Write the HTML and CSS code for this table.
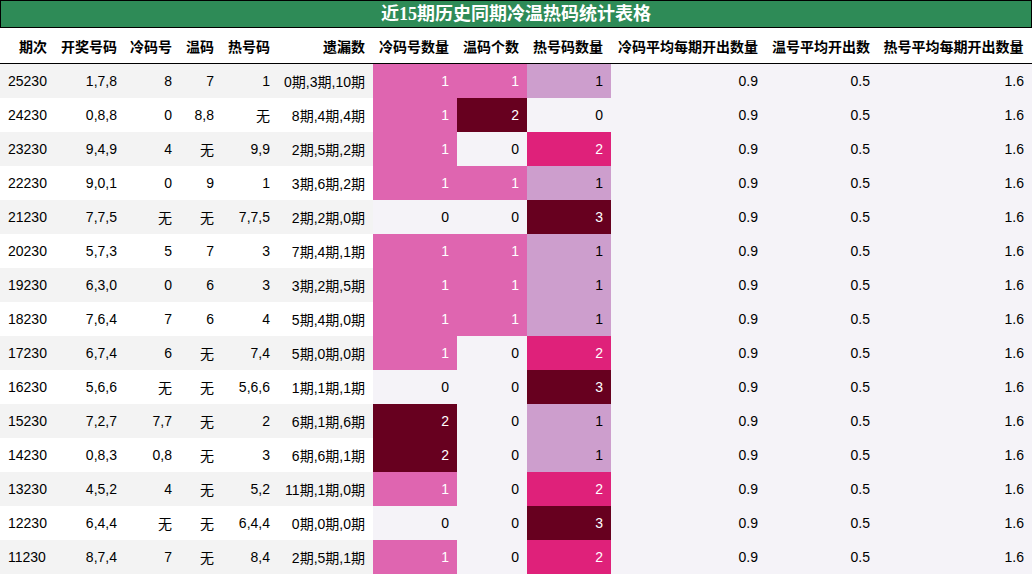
FILE: index.html
```html
<!DOCTYPE html>
<html lang="zh">
<head>
<meta charset="utf-8">
<title>近15期历史同期冷温热码统计表格</title>
<link rel="stylesheet" href="styles.css">
</head>
<body>
<div class="sheet">
  <div class="title">近15期历史同期冷温热码统计表格</div>
  <table class="grid">
    <colgroup>
      <col class="w55"><col class="w70"><col class="w55"><col class="w42"><col class="w56"><col class="w95">
      <col class="w84"><col class="w70"><col class="w84"><col class="w155"><col class="w112"><col class="w154">
    </colgroup>
    <thead>
      <tr>
        <th>期次</th><th>开奖号码</th><th>冷码号</th><th>温码</th><th>热号码</th><th>遗漏数</th>
        <th>冷码号数量</th><th>温码个数</th><th>热号码数量</th><th>冷码平均每期开出数量</th><th>温号平均开出数</th><th>热号平均每期开出数量</th>
      </tr>
    </thead>
    <tbody>
      <tr><td class="l">25230</td><td>1,7,8</td><td>8</td><td>7</td><td>1</td><td>0期,3期,10期</td><td class="c1">1</td><td class="c1">1</td><td class="h1">1</td><td class="z">0.9</td><td class="z">0.5</td><td class="z">1.6</td></tr>
      <tr><td class="l">24230</td><td>0,8,8</td><td>0</td><td>8,8</td><td>无</td><td>8期,4期,4期</td><td class="c1">1</td><td class="c2">2</td><td class="z">0</td><td class="z">0.9</td><td class="z">0.5</td><td class="z">1.6</td></tr>
      <tr><td class="l">23230</td><td>9,4,9</td><td>4</td><td>无</td><td>9,9</td><td>2期,5期,2期</td><td class="c1">1</td><td class="z">0</td><td class="h2">2</td><td class="z">0.9</td><td class="z">0.5</td><td class="z">1.6</td></tr>
      <tr><td class="l">22230</td><td>9,0,1</td><td>0</td><td>9</td><td>1</td><td>3期,6期,2期</td><td class="c1">1</td><td class="c1">1</td><td class="h1">1</td><td class="z">0.9</td><td class="z">0.5</td><td class="z">1.6</td></tr>
      <tr><td class="l">21230</td><td>7,7,5</td><td>无</td><td>无</td><td>7,7,5</td><td>2期,2期,0期</td><td class="z">0</td><td class="z">0</td><td class="h3">3</td><td class="z">0.9</td><td class="z">0.5</td><td class="z">1.6</td></tr>
      <tr><td class="l">20230</td><td>5,7,3</td><td>5</td><td>7</td><td>3</td><td>7期,4期,1期</td><td class="c1">1</td><td class="c1">1</td><td class="h1">1</td><td class="z">0.9</td><td class="z">0.5</td><td class="z">1.6</td></tr>
      <tr><td class="l">19230</td><td>6,3,0</td><td>0</td><td>6</td><td>3</td><td>3期,2期,5期</td><td class="c1">1</td><td class="c1">1</td><td class="h1">1</td><td class="z">0.9</td><td class="z">0.5</td><td class="z">1.6</td></tr>
      <tr><td class="l">18230</td><td>7,6,4</td><td>7</td><td>6</td><td>4</td><td>5期,4期,0期</td><td class="c1">1</td><td class="c1">1</td><td class="h1">1</td><td class="z">0.9</td><td class="z">0.5</td><td class="z">1.6</td></tr>
      <tr><td class="l">17230</td><td>6,7,4</td><td>6</td><td>无</td><td>7,4</td><td>5期,0期,0期</td><td class="c1">1</td><td class="z">0</td><td class="h2">2</td><td class="z">0.9</td><td class="z">0.5</td><td class="z">1.6</td></tr>
      <tr><td class="l">16230</td><td>5,6,6</td><td>无</td><td>无</td><td>5,6,6</td><td>1期,1期,1期</td><td class="z">0</td><td class="z">0</td><td class="h3">3</td><td class="z">0.9</td><td class="z">0.5</td><td class="z">1.6</td></tr>
      <tr><td class="l">15230</td><td>7,2,7</td><td>7,7</td><td>无</td><td>2</td><td>6期,1期,6期</td><td class="c2">2</td><td class="z">0</td><td class="h1">1</td><td class="z">0.9</td><td class="z">0.5</td><td class="z">1.6</td></tr>
      <tr><td class="l">14230</td><td>0,8,3</td><td>0,8</td><td>无</td><td>3</td><td>6期,6期,1期</td><td class="c2">2</td><td class="z">0</td><td class="h1">1</td><td class="z">0.9</td><td class="z">0.5</td><td class="z">1.6</td></tr>
      <tr><td class="l">13230</td><td>4,5,2</td><td>4</td><td>无</td><td>5,2</td><td>11期,1期,0期</td><td class="c1">1</td><td class="z">0</td><td class="h2">2</td><td class="z">0.9</td><td class="z">0.5</td><td class="z">1.6</td></tr>
      <tr><td class="l">12230</td><td>6,4,4</td><td>无</td><td>无</td><td>6,4,4</td><td>0期,0期,0期</td><td class="z">0</td><td class="z">0</td><td class="h3">3</td><td class="z">0.9</td><td class="z">0.5</td><td class="z">1.6</td></tr>
      <tr><td class="l">11230</td><td>8,7,4</td><td>7</td><td>无</td><td>8,4</td><td>2期,5期,1期</td><td class="c1">1</td><td class="z">0</td><td class="h2">2</td><td class="z">0.9</td><td class="z">0.5</td><td class="z">1.6</td></tr>
    </tbody>
  </table>
</div>
</body>
</html>
```
FILE: styles.css
```css
html, body {
  margin: 0;
  padding: 0;
  background: #ffffff;
}
.sheet {
  width: 1032px;
  font-family: "Liberation Sans", "Noto Sans CJK SC", sans-serif;
  color: #000;
}
.title {
  height: 26px;
  line-height: 26px;
  background: #2e8b57;
  border: 1px solid #000;
  color: #fff;
  text-align: center;
  font-family: "Liberation Serif", "Noto Sans CJK SC", serif;
  font-weight: bold;
  font-size: 18px;
}
.grid {
  width: 1032px;
  border-collapse: collapse;
  table-layout: fixed;
  font-size: 14px;
}
.w55 { width: 55px; }
.w70 { width: 70px; }
.w42 { width: 42px; }
.w56 { width: 56px; }
.w95 { width: 95px; }
.w84 { width: 84px; }
.w155 { width: 155px; }
.w112 { width: 112px; }
.w154 { width: 154px; }
.grid th {
  height: 35px;
  padding: 0 8px 0 0;
  text-align: right;
  font-weight: bold;
  font-family: "Noto Sans CJK SC", sans-serif;
  border-bottom: 1px solid #000;
  white-space: nowrap;
  background: #fff;
}
.grid thead th:last-child {
  border-right: 1px solid #000;
}
.grid td {
  height: 34px;
  padding: 0 8px 0 0;
  text-align: right;
  white-space: nowrap;
}
.grid td.l {
  text-align: left;
  padding: 0 0 0 8px;
}
.grid tbody tr:nth-child(odd) td { background: #f3f3f3; }
.grid tbody tr:nth-child(even) td { background: #ffffff; }
.grid tbody tr td.z { background: #f5f3f8; color: #000; }
.grid tbody tr td.c1 { background: #df65b0; color: #fff; }
.grid tbody tr td.c2 { background: #67001f; color: #fff; }
.grid tbody tr td.h1 { background: #cd9ecd; color: #000; }
.grid tbody tr td.h2 { background: #df217a; color: #fff; }
.grid tbody tr td.h3 { background: #67001f; color: #fff; }
```
